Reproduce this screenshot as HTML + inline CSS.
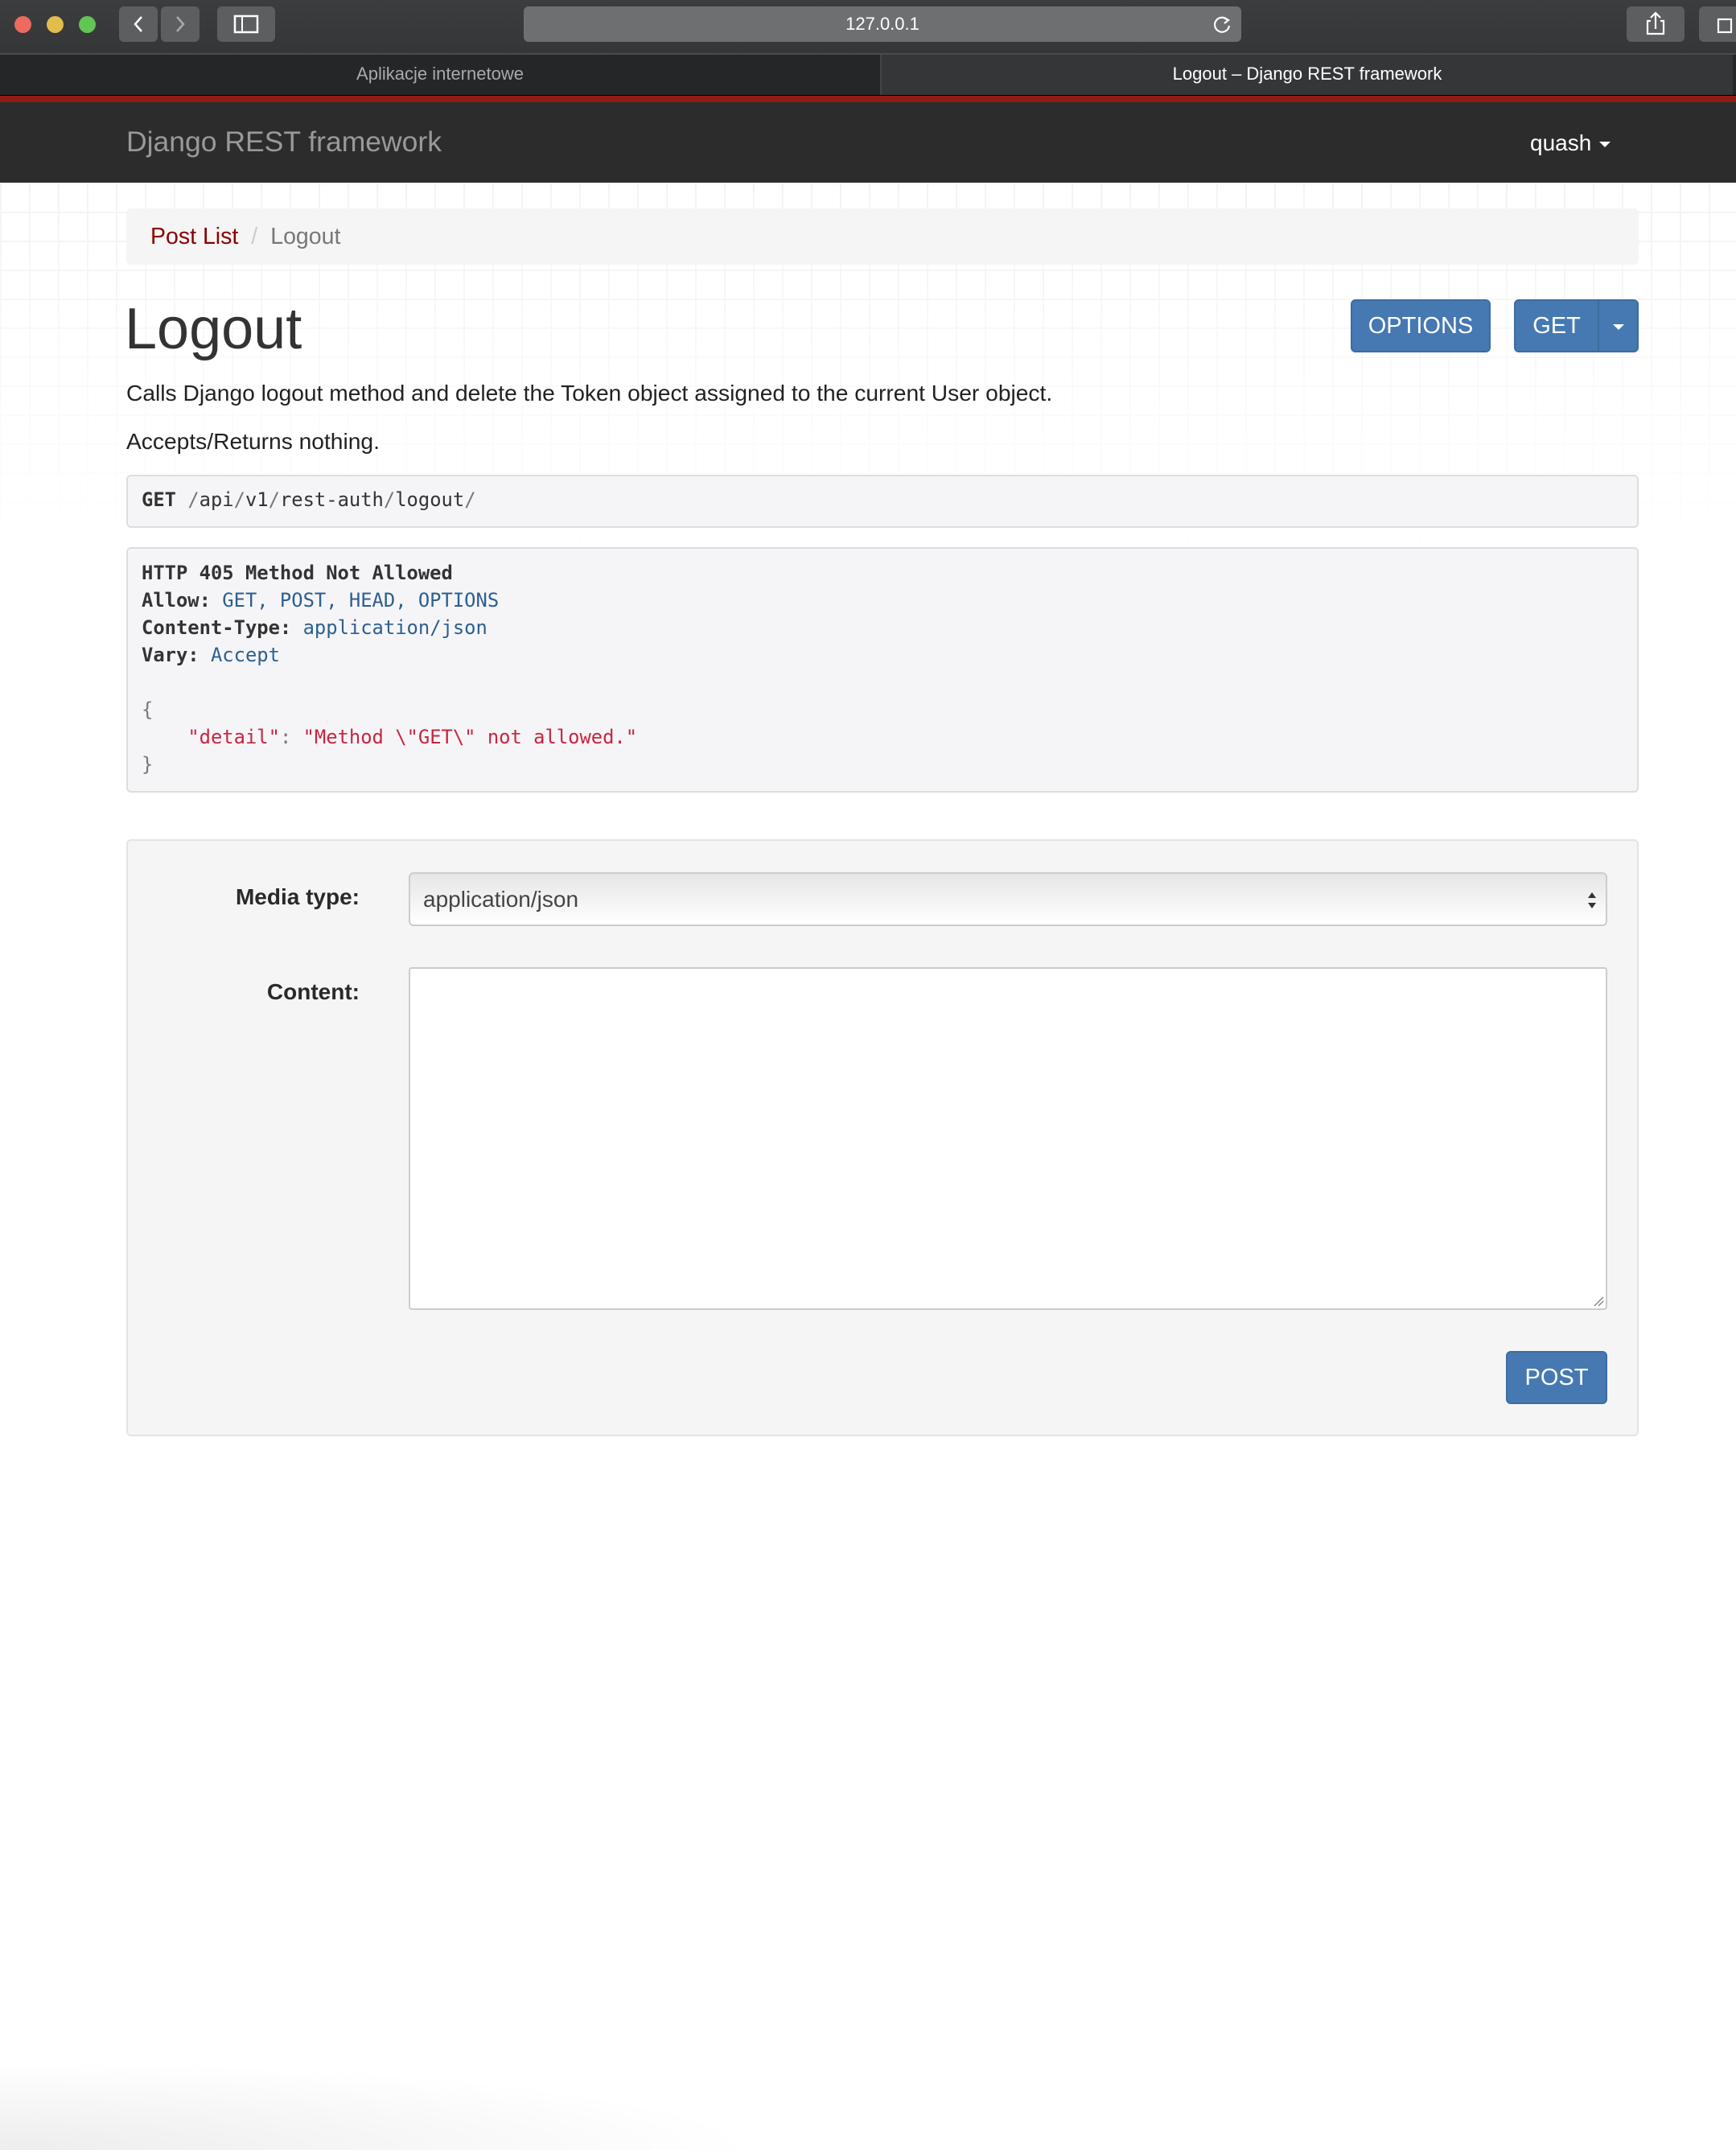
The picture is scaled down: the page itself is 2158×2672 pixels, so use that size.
<!DOCTYPE html>
<html><head><meta charset="utf-8"><style>
*{box-sizing:border-box;margin:0;padding:0}
body{width:2158px;height:2672px;overflow:hidden;background:#fff;font-family:"Liberation Sans",Arial,sans-serif;color:#333;position:relative}
.grid{position:absolute;left:0;top:227px;width:2158px;height:500px;background-image:linear-gradient(#f3f3f3 2px,transparent 2px),linear-gradient(90deg,#f3f3f3 2px,transparent 2px);background-size:36px 36px;-webkit-mask-image:linear-gradient(#000,rgba(0,0,0,0.3) 60%,transparent);}
.chrome{position:absolute;left:0;top:0;width:2158px;height:66px;background:linear-gradient(#3c3d3f,#353638)}
.dot{position:absolute;top:20px;width:21px;height:21px;border-radius:50%}
.cbtn{position:absolute;top:8px;height:44px;background:#5d5e60;border-radius:6px}
.url{position:absolute;left:651px;top:8px;width:892px;height:44px;background:#6e6f70;border-radius:6px;color:#fff;font-size:22px;text-align:center;line-height:44px}
.tabs{position:absolute;left:0;top:66px;width:2158px;height:52px;background:#252627;border-top:2px solid #4a4b4d}
.tab{position:absolute;top:0;height:50px;line-height:48px;text-align:center;font-size:22px}
.red{position:absolute;left:0;top:118px;width:2158px;height:9px;background:#921b15;border-top:1px solid #000}
.nav{position:absolute;left:0;top:127px;width:2158px;height:100px;background:#2c2c2c}
.brand{position:absolute;left:157px;top:29px;font-size:35.5px;color:#999}
.user{position:absolute;left:1902px;top:35px;font-size:28px;color:#fff}
.caret{display:inline-block;border-left:7px solid transparent;border-right:7px solid transparent;border-top:7px solid #fff;vertical-align:middle;margin-left:10px}
.bc{position:absolute;left:157px;top:259px;width:1880px;height:70px;background:#f5f5f5;border-radius:6px;font-size:28.5px;line-height:70px;padding-left:30px}
.bc a{color:#8b0000;text-decoration:none}
.bc .sep{color:#ccc;padding:0 16px}
.bc .act{color:#777}
h1{position:absolute;left:155px;top:368px;font-size:72px;font-weight:normal;color:#333}
.btn{position:absolute;top:372px;height:66px;background:#4679b2;border:2px solid #3d6c9f;color:#fff;font-size:29px;line-height:62px;text-align:center;border-radius:6px}
.p{position:absolute;left:157px;font-size:28.2px;color:#222}
pre{font-family:"DejaVu Sans Mono","Liberation Mono",monospace;}
.box{position:absolute;left:157px;width:1880px;background:#f5f5f8;border:2px solid #ddd;border-radius:6px;font-size:23.8px;color:#333}
.b{font-weight:bold}
.blue{color:#2d5f8f}
.redt{color:#c9253f}
.gray{color:#777}
.well{position:absolute;left:157px;top:1043px;width:1880px;height:742px;background:#f5f5f5;border:2px solid #e3e3e3;border-radius:6px}
.lbl{position:absolute;font-size:28px;font-weight:bold;color:#2a2a2a;text-align:right;width:300px;left:-12px}
.sel{position:absolute;left:349px;top:39px;width:1490px;height:67px;border:2px solid #ccc;border-radius:6px;background:linear-gradient(#e6e6e6,#fff);font-size:28px;line-height:63px;padding-left:16px;color:#444}
.ta{position:absolute;left:349px;top:157px;width:1490px;height:426px;border:2px solid #ccc;border-radius:4px;background:#fff}
.shadow{position:absolute;left:0;top:2560px;width:950px;height:112px;background:radial-gradient(ellipse at 0% 100%,rgba(0,0,0,0.07),rgba(0,0,0,0) 70%)}
</style></head><body>
<div class="chrome">
<div class="dot" style="left:18px;background:#ed6a5e"></div>
<div class="dot" style="left:58px;background:#e1bd4b"></div>
<div class="dot" style="left:98px;background:#62c554"></div>
<div class="cbtn" style="left:148px;width:48px"><svg width="48" height="44"><path d="M28 13 L20 22 L28 31" stroke="#fff" stroke-width="2.5" fill="none"/></svg></div>
<div class="cbtn" style="left:200px;width:48px"><svg width="48" height="44"><path d="M20 13 L28 22 L20 31" stroke="#aaa" stroke-width="2.5" fill="none"/></svg></div>
<div class="cbtn" style="left:270px;width:72px"><svg width="72" height="44"><rect x="22" y="12" width="28" height="20" stroke="#fff" stroke-width="2.5" fill="none"/><line x1="31" y1="12" x2="31" y2="32" stroke="#fff" stroke-width="2"/></svg></div>
<div class="url">127.0.0.1<svg style="position:absolute;right:10px;top:10px" width="26" height="26"><path d="M19 7 A9 9 0 1 0 21 14" stroke="#fff" stroke-width="2.2" fill="none"/><path d="M14 4 L20 7 L15 11" stroke="#fff" stroke-width="2.2" fill="none"/></svg></div>
<div class="cbtn" style="left:2022px;width:72px"><svg width="72" height="44"><path d="M30 18 h-4 v16 h20 v-16 h-4 M36 28 V8 M30 14 L36 8 L42 14" stroke="#fff" stroke-width="2.2" fill="none"/></svg></div>
<div class="cbtn" style="left:2112px;width:60px"><svg width="60" height="44"><rect x="24" y="16" width="16" height="16" stroke="#fff" stroke-width="2.2" fill="none"/></svg></div>
</div>
<div class="tabs">
<div class="tab" style="left:0;width:1094px;color:#aaa">Aplikacje internetowe</div>
<div class="tab" style="left:1094px;width:1060px;background:#353638;color:#fff;border-left:2px solid #444">Logout – Django REST framework</div>
</div>
<div class="red"></div>
<div class="nav"><div class="brand">Django REST framework</div><div class="user">quash<span class="caret"></span></div></div>
<div class="grid"></div>
<div class="bc"><a>Post List</a><span class="sep">/</span><span class="act">Logout</span></div>
<h1>Logout</h1>
<div class="btn" style="left:1679px;width:174px">OPTIONS</div>
<div class="btn" style="left:1882px;width:106px;border-radius:6px 0 0 6px">GET</div>
<div class="btn" style="left:1986px;width:51px;border-radius:0 6px 6px 0"><span class="caret" style="margin-left:0;vertical-align:middle"></span></div>
<div class="p" style="top:472px">Calls Django logout method and delete the Token object assigned to the current User object.</div>
<div class="p" style="top:532px">Accepts/Returns nothing.</div>
<div class="box" style="top:590px;height:66px;"><pre style="position:absolute;left:17px;top:15px;font-size:23.8px"><span class="b">GET</span> <span class="gray">/</span>api<span class="gray">/</span>v1<span class="gray">/</span>rest-auth<span class="gray">/</span>logout<span class="gray">/</span></pre></div>
<div class="box" style="top:680px;height:305px;"><pre style="position:absolute;left:17px;top:13px;font-size:23.8px;line-height:34px"><span class="b">HTTP 405 Method Not Allowed</span>
<span class="b">Allow:</span> <span class="blue">GET, POST, HEAD, OPTIONS</span>
<span class="b">Content-Type:</span> <span class="blue">application/json</span>
<span class="b">Vary:</span> <span class="blue">Accept</span>

<span class="gray">{</span>
    <span class="redt">"detail"</span><span class="gray">:</span> <span class="redt">"Method \"GET\" not allowed."</span>
<span class="gray">}</span></pre></div>
<div class="well">
<div class="lbl" style="top:54px">Media type:</div>
<div class="sel">application/json<svg style="position:absolute;right:10px;top:20px" width="14" height="26"><path d="M2 10 L7 3 L12 10Z M2 16 L7 23 L12 16Z" fill="#333"/></svg></div>
<div class="lbl" style="top:172px">Content:</div>
<div class="ta"><svg style="position:absolute;right:2px;bottom:2px" width="14" height="14"><path d="M2 13 L13 2 M7 13 L13 7" stroke="#888" stroke-width="1.5"/></svg></div>
<div class="btn" style="left:1713px;top:634px;width:126px">POST</div>
</div>
<div class="shadow"></div>
</body></html>
